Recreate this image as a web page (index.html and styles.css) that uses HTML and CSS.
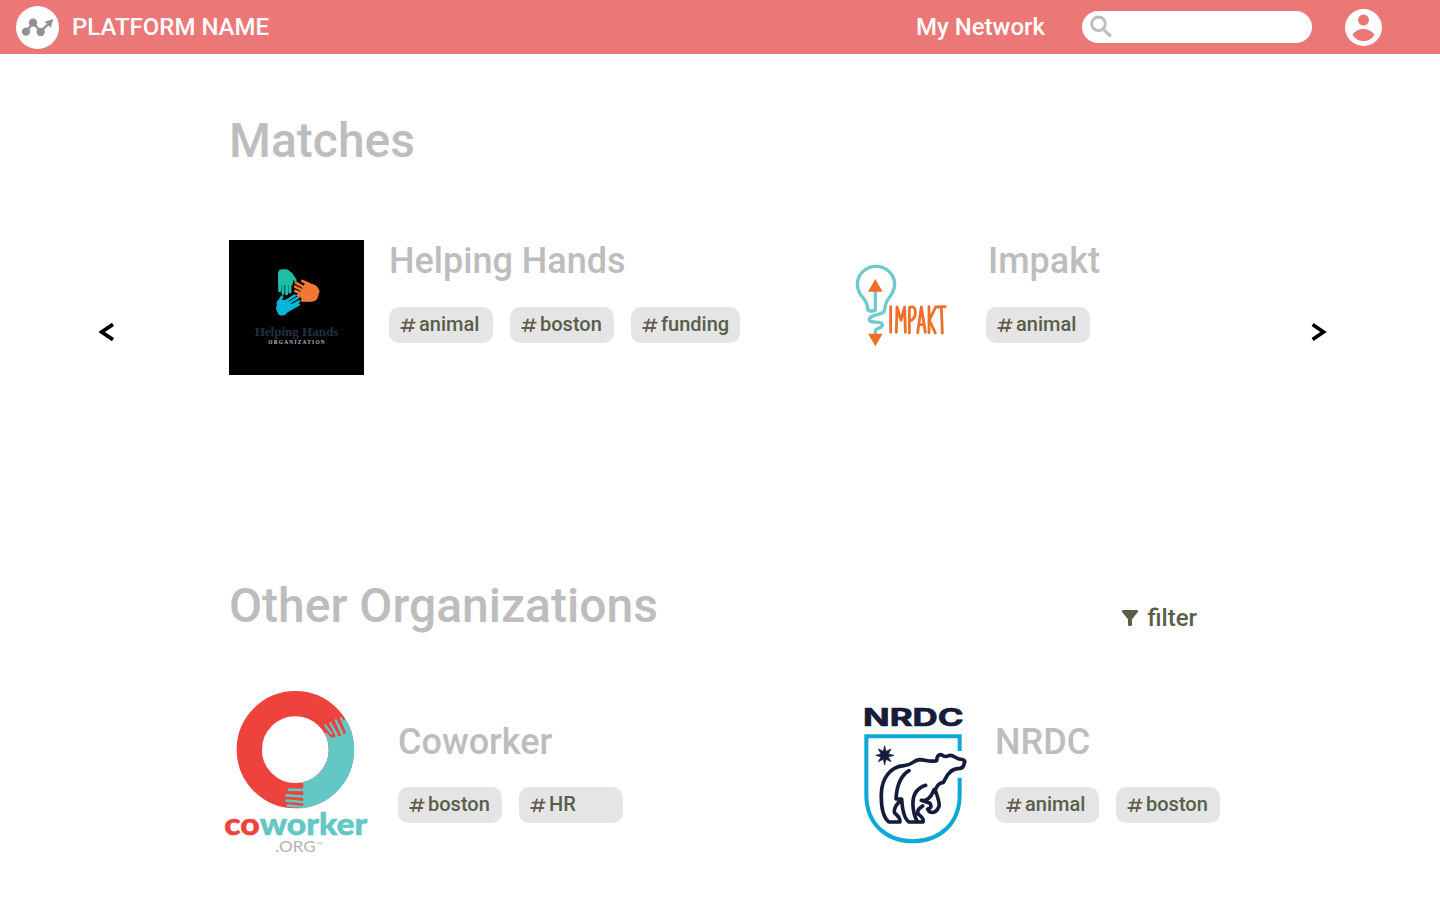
FILE: index.html
```html
<!DOCTYPE html>
<html lang="en">
<head>
<meta charset="utf-8">
<title>Platform Name</title>
<link rel="stylesheet" href="styles.css">
</head>
<body>
<svg width="0" height="0" class="defs">
  <symbol id="hash" viewBox="0 0 16 16"><path d="M6.8 2.3 4 14.3M12.4 2.3 9.6 14.3M2.6 5.6H14.8M1.2 11H13.4" fill="none" stroke="#655c4c" stroke-width="1.8" stroke-linecap="round"/></symbol>
</svg>
<header class="topbar">
  <svg class="brand-logo" viewBox="0 0 129 129"><circle cx="64.5" cy="64.5" r="64.5" fill="#fff"/><g fill="#929292" stroke="#929292"><path d="M30 77 52 50 73 77 96 55" fill="none" stroke-width="7"/><circle cx="30" cy="77" r="12.5" stroke="none"/><circle cx="51" cy="50" r="12.5" stroke="none"/><circle cx="74" cy="78" r="12.5" stroke="none"/><path d="M112 39 104 65 86 47Z" stroke="none"/></g></svg>
  <span class="brand">PLATFORM NAME</span>
  <a class="network">My Network</a>
  <div class="search"><svg viewBox="0 0 24 24"><circle cx="8.5" cy="8.8" r="6.8" fill="none" stroke="#bdbdbd" stroke-width="3"/><path d="M14 14.8 20.8 21.4" stroke="#bdbdbd" stroke-width="3.2"/></svg></div>
  <svg class="avatar" viewBox="0 0 37 37"><circle cx="18.5" cy="18.5" r="18.5" fill="#fff"/><circle cx="18.5" cy="11" r="5.5" fill="#ec7777"/><path d="M7.5 25.7C10 21.8 14 20 18.5 20S27 21.8 29.5 25.7C27 29.8 23 32 18.5 32S10 29.8 7.5 25.7Z" fill="#ec7777"/></svg>
</header>
<main>
  <h1 class="matches-title">Matches</h1>
  <section class="carousel">
    <svg class="arrow" viewBox="0 0 16 20"><path d="M14 2.4 2.6 10 14 17.6" fill="none" stroke="#000" stroke-width="3.7"/></svg>
    <article class="card helping">
      <svg class="hands-logo" viewBox="12 15 405 405">
        <path d="M12 15H417V420H12Z"/>
        <g fill="#20bda7" stroke="#20bda7" stroke-linecap="round"><path d="M159 151V117Q159 103 171 103H182Q190 103 196 110L207 128 202 151Z" stroke="none"/><path d="M164 145V167M174 145V175M185 145V176M195 145V171" fill="none" stroke-width="9"/><path d="M198 116 211 136" stroke-width="8"/></g>
        <g fill="#ef7838" stroke="#ef7838" stroke-linecap="round"><path d="M240 144 263 147Q278 151 284 168L277 191Q270 201 255 200L231 197 226 172Z" stroke="none"/><path d="M254 148 232 138M242 160 212 143M238 169 210 155M236 179 211 168M240 189 218 181M254 196 231 196" fill="none" stroke-width="8"/></g>
        <g fill="#08b4d8" stroke="#08b4d8" stroke-linecap="round"><path d="M157 198 170 193 190 199 207 212 181 239Q170 246 160 238L153 222Z" stroke="none"/><path d="M158 205 171 185M181 199 209 182M188 206 219 188M192 216 222 199M190 226 221 209" fill="none" stroke-width="8"/></g>
        <text x="89" y="302" textLength="251" lengthAdjust="spacingAndGlyphs" font-family="Liberation Serif" font-weight="700" font-size="40" fill="#25303a">Helping Hands</text>
        <text x="130" y="327" textLength="169" font-family="Liberation Serif" font-weight="700" font-size="16" fill="#b7bcc0">ORGANIZATION</text>
      </svg>
      <div class="info"><h2>Helping Hands</h2><div class="tags"><span class="tag"><svg><use href="#hash"/></svg>animal</span><span class="tag"><svg><use href="#hash"/></svg>boston</span><span class="tag wide"><svg><use href="#hash"/></svg>funding</span></div></div>
    </article>
    <article class="card impakt">
      <svg class="impakt-logo" viewBox="0 0 390 330">
        <path d="M106 120V176Q106 183 99 183H90Q83 183 83 175C83 158 72 148 62 134C52 119 52 112 52 103A56 54 0 0 1 164 103C164 125 153 136 143 149C132 164 137 181 130 187C121 195 89 194 88 208C88 224 126 209 127 224C128 237 106 232 106 244V254" fill="none" stroke="#6dcbcd" stroke-width="10"/>
        <path d="M106 87 128 125H84ZM84 251H128L106 289Z" fill="#ee7028"/>
        <g fill="none" stroke="#ee7028" stroke-width="8.5" stroke-linecap="round" stroke-linejoin="round"><path d="M152 170V247M169 247 171 171 183 211 194 171 196 247M208 249V173Q226 165 226 187T209 213M233 248 244 171 256 247M236 224H253M267 170V248M287 171 268 210 286 249M288 171 316 170M304 171 307 249"/></g>
      </svg>
      <div class="info"><h2>Impakt</h2><div class="tags"><span class="tag"><svg><use href="#hash"/></svg>animal</span></div></div>
    </article>
    <svg class="arrow next" viewBox="0 0 16 20"><path d="M1.6 2.4 12.5 10 1.6 17.6" fill="none" stroke="#000" stroke-width="3.7"/></svg>
  </section>
  <div class="others-head"><h1>Other Organizations</h1><a class="filter"><svg viewBox="0 0 16 16"><path d="M1.2 0H14.8Q17 .6 15.5 2.5L10 9.3V14.7Q10 16 8.7 16H7.3Q6 16 6 14.7V9.3L.5 2.5Q-1 .6 1.2 0Z" fill="#566049"/></svg>filter</a></div>
  <section class="orgs">
    <article class="card coworker">
      <svg class="coworker-logo" viewBox="0 0 495 555">
        <circle cx="241" cy="209" r="138" fill="none" stroke="#ee423d" stroke-width="76"/>
        <path d="M391 116A177 177 0 0 1 264 385V306A100 100 0 0 0 329 160L352 148Z" fill="#62c7c5"/>
        <path d="M324 139 350 168M338 129 357 168M354 122 373 165M370 116 388 157" stroke="#ee423d" stroke-width="9" stroke-linecap="round"/>
        <path d="M331 136 349 160M346 130 364 162M362 121 380 156M378 114 395 146" stroke="#62c7c5" stroke-width="7" stroke-linecap="round"/>
        <path d="M222 329 265 330M214 346 265 350M214 362 265 366M219 377 265 380" stroke="#62c7c5" stroke-width="8" stroke-linecap="round"/>
        <path d="M240 318H262M232 338 262 340M232 355 262 358M232 371 262 374" stroke="#ee423d" stroke-width="7" stroke-linecap="round"/>
        <text x="28" y="464" textLength="429" lengthAdjust="spacingAndGlyphs" font-family="Lato" font-weight="900" font-size="89" fill="#62c7c5" stroke="#62c7c5" stroke-width="1.5"><tspan fill="#ee423d" stroke="#ee423d">co</tspan>worker</text>
        <text x="181" y="517" textLength="121" lengthAdjust="spacingAndGlyphs" font-family="Lato" font-size="44" fill="#b7b7bb">.ORG</text><text x="304" y="496" font-family="Lato" font-size="12" fill="#b7b7bb">TM</text>
      </svg>
      <div class="info"><h2>Coworker</h2><div class="tags"><span class="tag"><svg><use href="#hash"/></svg>boston</span><span class="tag"><svg><use href="#hash"/></svg>HR</span></div></div>
    </article>
    <article class="card nrdc">
      <svg class="nrdc-logo" viewBox="0 0 390 480">
        <text x="39" y="92" textLength="302" lengthAdjust="spacingAndGlyphs" font-family="Inter" font-weight="700" font-size="71" fill="#151b3b" stroke="#151b3b" stroke-width="2">NRDC</text>
        <path d="M329 168V124H49V300C49 385 108 439 188 439C270 439 329 385 329 300V248" fill="none" stroke="#0ca9d7" stroke-width="12"/>
        <g transform="translate(72 135)">
          <path d="M32 17 36 34 51 27 43 42 60 46 43 51 51 65 36 58 32 75 28 58 13 65 21 51 5 46 21 42 13 27 28 34Z" fill="#151b3b" stroke="#151b3b" stroke-width="2"/>
          <path d="M78 246H44C27 231 21 198 22 162C23 113 50 80 90 77C116 76 117 60 137 59C155 59 166 67 188 62C189 44 197 41 207 47C213 51 218 50 224 47C236 43 244 54 255 57C268 58 275 62 271 69C270 78 265 87 251 86C232 87 231 95 221 104L208 127C193 130 188 137 184 151C190 170 198 187 195 199C190 214 179 221 166 215L161 207C170 205 174 200 168 190L142 181C159 184 164 174 172 166L180 149M105 92C80 107 68 139 66 177H83C85 212 92 237 105 246H147C150 235 143 229 132 222C129 209 137 204 146 198M155 136C124 146 115 168 117 197C118 218 124 234 130 245M82 179C65 195 58 207 62 219C72 229 78 230 78 245" fill="none" stroke="#151b3b" stroke-width="11" stroke-linejoin="round" stroke-linecap="round"/>
        </g>
      </svg>
      <div class="info"><h2>NRDC</h2><div class="tags"><span class="tag"><svg><use href="#hash"/></svg>animal</span><span class="tag"><svg><use href="#hash"/></svg>boston</span></div></div>
    </article>
  </section>
</main>
</body>
</html>
```
FILE: styles.css
```css
* { box-sizing: border-box; }
body { margin: 0; height: 900px; overflow: hidden; background: #fff; font-family: Roboto, sans-serif; font-weight: 500; }
svg { display: block; flex: none; }
.defs { position: absolute; }
h1, h2 { margin: 0; font-weight: 500; color: #bdbdbd; white-space: nowrap; }
h1 { font-size: 48px; line-height: 56px; }
h2 { font-size: 36px; line-height: 42px; }
.topbar { height: 54px; padding: 0 58px 0 16px; display: flex; align-items: center; background: #ec7777; color: #fff; font-size: 24px; line-height: 28px; }
.brand-logo { width: 43px; height: 43px; }
.brand { margin-left: 13px; }
.network { margin-left: auto; }
.search { width: 230px; height: 32px; margin: 0 33px 0 37px; padding: 4px 8px; border-radius: 16px; background: #fff; }
.search svg { width: 24px; height: 24px; }
.avatar { width: 37px; height: 37px; }
.matches-title { margin: 59px 0 0 229px; }
.carousel { display: grid; grid-template-columns: 130px 611px 471px 16px; height: 135px; margin: 71px 0 0 99px; }
.arrow { width: 16px; height: 20px; margin-top: 82px; }
.card { display: flex; align-items: flex-start; }
.hands-logo { width: 135px; height: 135px; }
.helping { gap: 25px; }
.impakt { gap: 16px; }
.impakt-logo { width: 130px; height: 110px; margin-top: 10px; }
.impakt h2 { margin-left: 2px; }
.tags { display: flex; gap: 17px; margin-top: 25px; }
.tag { width: 104px; height: 36px; padding: 0 0 2px 11px; display: flex; align-items: center; gap: 3px; border-radius: 10px; background: #e5e5e5; color: #566049; font-size: 20px; line-height: 23px; }
.tag svg { width: 16px; height: 16px; margin-top: 2px; }
.wide { width: 109px; }
.others-head { display: flex; justify-content: space-between; margin: 203px 243px 0 229px; }
.filter { display: flex; align-items: center; gap: 10px; height: 28px; margin-top: 26px; font-size: 24px; line-height: 28px; color: #566049; }
.filter svg { width: 16px; height: 16px; }
.orgs { display: grid; grid-template-columns: 635px auto; margin: 46px 0 0 215px; }
.orgs .info { padding-top: 41px; }
.orgs .tags { margin-top: 24px; }
.coworker { gap: 18px; }
.coworker-logo { width: 165px; height: 185px; }
.nrdc { gap: 15px; }
.nrdc-logo { width: 130px; height: 160px; margin-top: 15px; }
```
